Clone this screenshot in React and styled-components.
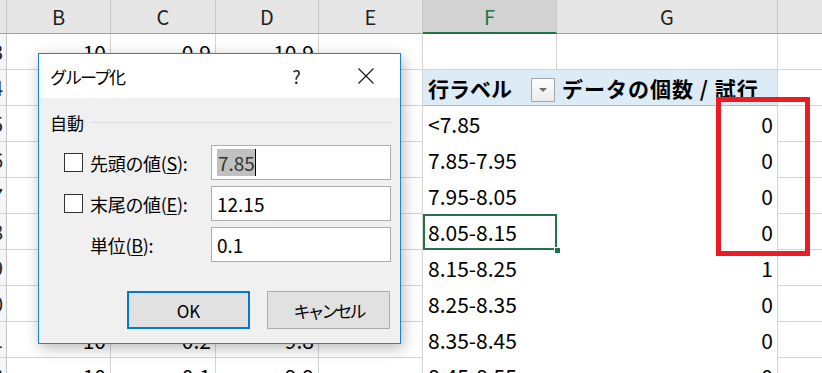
import React from 'react';
import styled, { createGlobalStyle, css } from 'styled-components';

const GlobalStyle = createGlobalStyle`
  html, body { margin: 0; padding: 0; background: #fff; overflow: hidden; }
  *, *::before, *::after { box-sizing: border-box; }
`;

const FONT = `"Noto Sans CJK JP", "Noto Sans", sans-serif`;

const Screen = styled.div`
  position: relative;
  width: 822px;
  height: 373px;
  overflow: hidden;
  background: #fff;
  font-family: ${FONT};
`;

const Sheet = styled.div`
  display: grid;
  grid-template-columns: 7px 104px 105px 103px 104px 134px 221px 80px;
  grid-template-rows: 34px repeat(10, 36px);
`;

const Corner = styled.div`
  background: #e6e6e6;
  border-right: 1px solid #c6c6c6;
  border-bottom: 1px solid #9e9e9e;
`;

const ColHeader = styled.div`
  display: flex;
  align-items: center;
  justify-content: center;
  font-size: 20px;
  background: ${(p) => (p.$active ? '#d2d2d2' : '#e6e6e6')};
  color: ${(p) => (p.$active ? '#217346' : '#222')};
  border-right: 1px solid #c6c6c6;
  border-bottom: ${(p) => (p.$active ? '2px solid #217346' : '1px solid #9e9e9e')};
`;

const RowHeader = styled.div`
  display: flex;
  align-items: center;
  justify-content: flex-end;
  overflow: hidden;
  padding-right: 3px;
  font-size: 20px;
  color: #222;
  background: #f6f6f6;
  border-right: 1px solid #c6c6c6;
  border-bottom: 1px solid #d4d4d4;
`;

const Cell = styled.div`
  position: relative;
  display: flex;
  align-items: center;
  justify-content: ${(p) => (p.$align === 'right' ? 'flex-end' : 'flex-start')};
  padding: 0 ${(p) => (p.$align === 'right' ? '4px' : '5px')};
  font-size: 21px;
  color: #000;
  white-space: nowrap;
  border-right: 1px solid #d4d4d4;
  border-bottom: 1px solid #d4d4d4;

  ${(p) =>
    p.$pivot === 'head' &&
    css`
      background: #ddebf7;
      border-bottom: 1px solid #9bc2e6;
      font-weight: 700;
      font-size: 21px;
    `}
  ${(p) =>
    p.$pivot === 'head' &&
    p.$side === 'value' &&
    css`
      letter-spacing: 1px;
    `}
  ${(p) =>
    p.$pivot === 'body' &&
    css`
      border-bottom: none;
    `}
  ${(p) =>
    p.$pivot &&
    p.$side === 'label' &&
    css`
      border-right: none;
    `}
  ${(p) =>
    p.$selected &&
    css`
      box-shadow: inset 0 0 0 2px #217346;
      &::after {
        content: '';
        position: absolute;
        right: -4px;
        bottom: -4px;
        width: 7px;
        height: 7px;
        background: #217346;
        border: 1px solid #fff;
        z-index: 1;
      }
    `}
`;

const PivotLabel = styled.span`
  flex: 1;
`;

const FilterButton = styled.span`
  width: 24px;
  height: 24px;
  margin-right: -3px;
  margin-top: 4px;
  border: 1px solid #a6a6a6;
  background: linear-gradient(#fdfdfd, #ececec);
  display: flex;
  align-items: center;
  justify-content: center;
`;

const Annotation = styled.div`
  position: absolute;
  left: 716px;
  top: 97px;
  width: 94px;
  height: 159px;
  border: 5px solid #ec1c24;
  z-index: 3;
`;

/* ---------- Dialog ---------- */

const Dialog = styled.div`
  position: absolute;
  left: 38px;
  top: 53px;
  width: 363px;
  height: 291px;
  border: 1px solid #1883d7;
  background: #f0f0f0;
  box-shadow: 2px 4px 14px rgba(0, 0, 0, 0.28);
  display: flex;
  flex-direction: column;
  font-family: ${FONT};
  color: #000;
  z-index: 2;
`;

const TitleBar = styled.div`
  height: 44px;
  background: #fff;
  display: flex;
  align-items: center;
  padding-left: 11px;
`;

const Title = styled.div`
  flex: 1;
  font-size: 17px;
  letter-spacing: -2px;
`;

const TitleButton = styled.div`
  width: 69px;
  height: 100%;
  display: flex;
  align-items: center;
  justify-content: center;
  font-size: 18px;
  color: #222;
`;

const Body = styled.div`
  flex: 1;
  padding: 0 8px 0 11px;
  display: flex;
  flex-direction: column;
`;

const GroupHeader = styled.div`
  margin-top: 14px;
  height: 20px;
  display: flex;
  align-items: center;
  gap: 6px;
  font-size: 17px;
`;

const GroupLine = styled.div`
  flex: 1;
  height: 1px;
  background: #dadada;
`;

const FormGrid = styled.div`
  margin-top: 13px;
  padding-left: 14px;
  display: grid;
  grid-template-columns: 26px 121px 180px;
  grid-auto-rows: 35px;
  row-gap: 6px;
  align-items: center;
`;

const CheckBox = styled.div`
  width: 19px;
  height: 19px;
  border: 1px solid #333;
  background: #fff;
`;

const FieldLabel = styled.div`
  font-size: 18px;
  white-space: nowrap;
  letter-spacing: -0.3px;
`;

const U = styled.span`
  text-decoration: underline;
  text-underline-offset: 2px;
`;

const Field = styled.div`
  height: 35px;
  border: 1px solid #adadad;
  background: #fff;
  display: flex;
  align-items: center;
  padding-left: 5px;
  font-size: 19px;
`;

const Selected = styled.span`
  background: #c0c0c0;
  color: #333;
  padding: 0 0 0 1px;
  line-height: 27px;
  border-right: 1px solid #000;
`;

const ButtonRow = styled.div`
  margin-top: 29px;
  padding-right: 2px;
  display: flex;
  justify-content: flex-end;
  gap: 17px;
`;

const Button = styled.div`
  width: 123px;
  height: 38px;
  display: flex;
  align-items: center;
  justify-content: center;
  background: #e1e1e1;
  font-size: 17px;
  letter-spacing: ${(p) => (p.$narrow ? '-3px' : '0')};
  border: ${(p) => (p.$default ? '2px solid #0078d7' : '1px solid #adadad')};
`;

/* Values in B–D for rows 4–10 sit entirely under the dialog, so they are left blank. */
const rows = [
  { n: '3', b: '10', c: '0.9', d: '10.9' },
  { n: '4', head: true },
  { n: '5', f: '<7.85', g: '0' },
  { n: '6', f: '7.85-7.95', g: '0' },
  { n: '7', f: '7.95-8.05', g: '0' },
  { n: '8', f: '8.05-8.15', g: '0', sel: true },
  { n: '9', f: '8.15-8.25', g: '1' },
  { n: '10', f: '8.25-8.35', g: '0' },
  { n: '11', b: '10', c: '0.2', d: '9.8', f: '8.35-8.45', g: '0' },
  { n: '12', b: '10', c: '0.1', d: '9.9', f: '8.45-8.55', g: '0' },
];

const cols = ['B', 'C', 'D', 'E', 'F', 'G', ''];

function CloseIcon() {
  return (
    <svg width="16" height="16" viewBox="0 0 16 16">
      <path d="M0.5 0.5 L15.5 15.5 M15.5 0.5 L0.5 15.5" stroke="#111" strokeWidth="1.1" fill="none" />
    </svg>
  );
}

function DropIcon() {
  return (
    <svg width="10" height="6" viewBox="0 0 10 6">
      <path d="M1 1 L9 1 L5 5 Z" fill="#6e6e6e" />
    </svg>
  );
}

export default function App() {
  return (
    <Screen>
      <GlobalStyle />
      <Sheet>
        <Corner />
        {cols.map((c, i) => (
          <ColHeader key={i} $active={c === 'F'}>
            {c}
          </ColHeader>
        ))}
        {rows.map((r) => {
          const pivot = r.head ? 'head' : r.f ? 'body' : undefined;
          return (
            <React.Fragment key={r.n}>
              <RowHeader>{r.n}</RowHeader>
              <Cell $align="right">{r.b}</Cell>
              <Cell $align="right">{r.c}</Cell>
              <Cell $align="right">{r.d}</Cell>
              <Cell />
              <Cell $pivot={pivot} $side="label" $selected={r.sel}>
                {r.head ? (
                  <>
                    <PivotLabel>行ラベル</PivotLabel>
                    <FilterButton>
                      <DropIcon />
                    </FilterButton>
                  </>
                ) : (
                  r.f
                )}
              </Cell>
              <Cell $pivot={pivot} $side="value" $align={r.head ? 'left' : 'right'}>
                {r.head ? 'データの個数 / 試行' : r.g}
              </Cell>
              <Cell />
            </React.Fragment>
          );
        })}
      </Sheet>

      <Annotation />

      <Dialog>
        <TitleBar>
          <Title>グループ化</Title>
          <TitleButton>?</TitleButton>
          <TitleButton>
            <CloseIcon />
          </TitleButton>
        </TitleBar>
        <Body>
          <GroupHeader>
            <span>自動</span>
            <GroupLine />
          </GroupHeader>
          <FormGrid>
            <CheckBox />
            <FieldLabel>
              先頭の値(<U>S</U>):
            </FieldLabel>
            <Field>
              <Selected>7.85</Selected>
            </Field>

            <CheckBox />
            <FieldLabel>
              末尾の値(<U>E</U>):
            </FieldLabel>
            <Field>12.15</Field>

            <span />
            <FieldLabel>
              単位(<U>B</U>):
            </FieldLabel>
            <Field>0.1</Field>
          </FormGrid>
          <ButtonRow>
            <Button $default>OK</Button>
            <Button $narrow>キャンセル</Button>
          </ButtonRow>
        </Body>
      </Dialog>
    </Screen>
  );
}
